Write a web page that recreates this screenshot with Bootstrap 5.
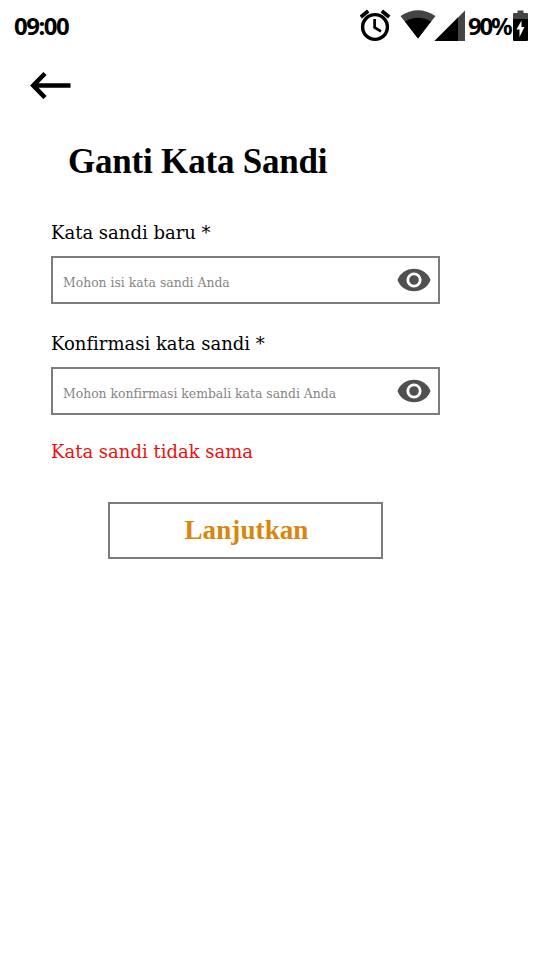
<!DOCTYPE html>
<html lang="id">
<head>
<meta charset="utf-8">
<meta name="viewport" content="width=device-width, initial-scale=1">
<title>Ganti Kata Sandi</title>
<link href="https://cdn.jsdelivr.net/npm/bootstrap@5.3.0/dist/css/bootstrap.min.css" rel="stylesheet">
<style>
body{font-family:"DejaVu Serif",serif;font-variant-ligatures:none;color:#000;background:#fff;width:540px;height:960px;overflow:hidden}
svg{display:block;flex:none}
.status{height:54px;padding-left:14px;font:700 24px/52px "Noto Sans",sans-serif}
.clock{letter-spacing:-1.500px}
.percent{letter-spacing:-2.200px;width:45px;white-space:nowrap}
.status-icons{margin-right:12px}
.back{margin:17px 0 0 30px;width:41px;height:28px}
.title{font:700 35px/44px "Liberation Serif",serif;margin:41px 0 0 68px;letter-spacing:-.2px}
.form-area{width:389px;margin:37px 0 0 51px}
.field-label{font-size:18px;line-height:24px;height:24px;white-space:nowrap}
.field{height:48px;margin:11px 0 28px;border:2px solid #7c7c7c;border-radius:0;padding:0 7px 0 10px}
.field input{font-size:12.4px;line-height:20px;color:#000;padding:4px 0 0;height:42px;font-variant-ligatures:none}
.field input::placeholder{color:#858585;opacity:1}
.field input:focus{box-shadow:none}
.field svg{margin-top:-1px}
.error{font-size:18px;line-height:24px;color:#f00f0f;margin-top:-3px}
.next{width:275px;height:57px;margin:38px 0 0 57px;border:2px solid #7c7c7c;border-radius:0;padding:0 0 1px 2px;color:#d9860d;font:700 27px/1 "Liberation Serif",serif;letter-spacing:.1px}
.next:hover{border-color:#777;color:#b86d00}
</style>
</head>
<body>
<header class="status d-flex justify-content-between">
  <span class="clock">09:00</span>
  <div class="status-icons d-flex">
    <svg width="108" height="54" viewBox="360 0 108 54" aria-hidden="true">
      <circle cx="375" cy="27" r="12.4" fill="none" stroke="#000" stroke-width="3.4"/>
      <path d="M374.6 19v8.4l6.4 4" fill="none" stroke="#000" stroke-width="2.7"/>
      <path d="M360.800 17l7.4-6M389.200 17l-7.4-6" fill="none" stroke="#000" stroke-width="3.8"/>
      <path d="M400.5 16q17.500-11.500 35 0L418 38.500z" fill="#444"/>
      <path d="M405 21.500q13-7.500 26 0L418 38.500z"/>
      <path d="M465 10.500v30.500h-30.500z" fill="#444"/>
      <path d="M458 17.500v23.500h-23.500z"/>
    </svg>
    <span class="percent">90%</span>
    <svg width="15" height="54" viewBox="513 0 15 54" aria-hidden="true">
      <path d="M513 19v-5q0-1 1-1h3.500v-2.500h6v2.500h3.500q1 0 1 1v5z" fill="#444"/>
      <path d="M513 19h15v21q0 1-1 1h-13q-1 0-1-1z"/>
      <path d="M521.500 20.500v6.500h3l-5 10v-7.500h-3z" fill="#fff"/>
    </svg>
  </div>
</header>
<main>
  <a class="back d-block" href="#" aria-label="Kembali">
    <svg width="41" height="28" viewBox="0 0 41 28" fill="none" stroke="#000" stroke-width="4.600"><path d="M40.500 14.500H3M15 2.500L3.300 14.500l11.700 12"/></svg>
  </a>
  <h1 class="title">Ganti Kata Sandi</h1>
  <form class="form-area">
    <label class="field-label d-block" for="pw1">Kata sandi baru *</label>
    <div class="field d-flex align-items-center">
      <input class="form-control border-0 bg-transparent" id="pw1" type="password" placeholder="Mohon isi kata sandi Anda">
      <svg width="34" height="24" viewBox="0 0 34 24" fill="#505050" aria-hidden="true"><path d="M.5 12C3 5 9.500.7 17 .7S31 5 33.500 12C31 19 24.500 23.300 17 23.300S3 19 .5 12z"/><circle cx="17" cy="12" r="6.200" fill="none" stroke="#fff" stroke-width="2.800"/></svg>
    </div>
    <label class="field-label d-block" for="pw2">Konfirmasi kata sandi *</label>
    <div class="field d-flex align-items-center">
      <input class="form-control border-0 bg-transparent" id="pw2" type="password" placeholder="Mohon konfirmasi kembali kata sandi Anda">
      <svg width="34" height="24" viewBox="0 0 34 24" fill="#505050" aria-hidden="true"><path d="M.5 12C3 5 9.500.7 17 .7S31 5 33.500 12C31 19 24.500 23.300 17 23.300S3 19 .5 12z"/><circle cx="17" cy="12" r="6.200" fill="none" stroke="#fff" stroke-width="2.800"/></svg>
    </div>
    <div class="error" role="alert">Kata sandi tidak sama</div>
    <button class="next btn d-block" type="button">Lanjutkan</button>
  </form>
</main>
<script src="https://cdn.jsdelivr.net/npm/bootstrap@5.3.0/dist/js/bootstrap.bundle.min.js"></script>
</body>
</html>
